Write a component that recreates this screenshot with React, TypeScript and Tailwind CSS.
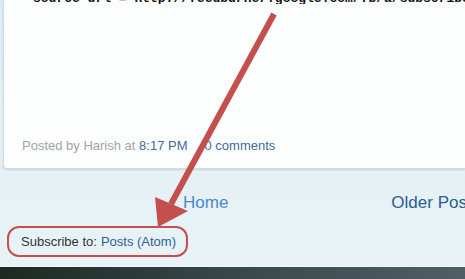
export default function App() {
  return (
    <div className="relative h-[279px] w-[465px] overflow-hidden bg-gradient-to-b from-[#dcecf5] via-[#e4f0f6] to-[#e9f3f6] font-['Liberation_Sans',Arial,sans-serif]">
      <div className="ml-[3px] flex h-[169px] flex-col rounded-bl-[4px] border-b border-l border-[#cfdde4] bg-[#fcfefd] shadow-[0_1px_2px_rgba(0,0,0,0.12)]">
        <div className="h-[4px] overflow-hidden pl-[29px]">
          <p className="-mt-[9px] whitespace-nowrap font-['Liberation_Mono',monospace] text-[13px] font-bold leading-[16px] text-[#111]">source url = http://feedburner.google.com/fb/a/subscribe</p>
        </div>
        <div className="flex-1" />
        <p className="mb-[15px] ml-[18px] whitespace-nowrap text-[13px] leading-[15px] text-[#a3a3a3]">
          Posted by Harish at <span className="text-[#3f6c9c]">8:17 PM</span>
          <span className="ml-[17px] text-[#3f6c9c]">0 comments</span>
        </p>
      </div>

      <nav className="flex pt-[24px] text-[17px] leading-[20px]">
        <a className="ml-[183px] text-[#4b89c9]">Home</a>
        <a className="ml-[163px] whitespace-nowrap text-[#2b5d91]">Older Posts</a>
      </nav>

      <div className="ml-[7px] mt-[13px] flex h-[31px] w-[181px] items-center rounded-[12px] border-2 border-[#c4504e] pl-[12px] text-[13px] leading-[16px]">
        <span className="text-[#333]">Subscribe to:</span>
        <a className="ml-[4px] text-[#2d5f94]">Posts (Atom)</a>
      </div>

      <div className="mt-[9px] h-px bg-[#f2f7f8]" />
      <div className="h-[12px] bg-gradient-to-r from-[#1c2a22] via-[#38484a] to-[#4f5f65]" />

      <svg className="pointer-events-none absolute inset-0" width="465" height="279" viewBox="0 0 465 279">
        <line x1="274" y1="14" x2="171" y2="204" stroke="#c4504e" strokeWidth="6" />
        <polygon points="155,197 188,211 158,227" fill="#c4504e" />
      </svg>
    </div>
  );
}
